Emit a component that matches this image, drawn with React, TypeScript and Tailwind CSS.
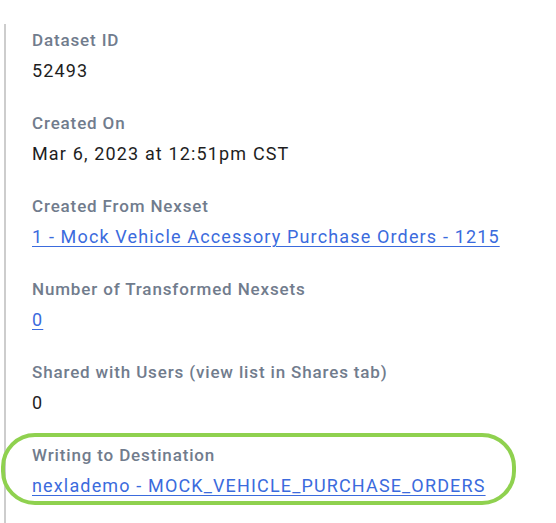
import React from "react";

const font = { fontFamily: "Roboto, 'Noto Sans', sans-serif" };

function Label({ children }: { children: React.ReactNode }) {
  return (
    <div className="text-[17px] leading-[26px] font-medium tracking-[0.85px] text-[#717c8d]">
      {children}
    </div>
  );
}

function Value({ children }: { children: React.ReactNode }) {
  return <div className="mt-[5px] text-[18px] leading-[26px] tracking-[1.15px] text-[#1e1e1e]">{children}</div>;
}

function LinkValue({ children }: { children: React.ReactNode }) {
  return (
    <div className="mt-[5px] text-[18px] leading-[26px] tracking-[1.15px]">
      <a href="#" className="text-[#3b6bdd] underline underline-offset-[3px] decoration-[1px]">
        {children}
      </a>
    </div>
  );
}

export default function App() {
  return (
    <div className="w-[556px] h-[523px] bg-white overflow-hidden" style={font}>
      <div className="ml-[4px] mt-[24px] h-[499px] border-l-2 border-[#cdcdcd] pl-[26px] pt-[3px] flex flex-col gap-[26px]">
        <div>
          <Label>Dataset ID</Label>
          <Value>52493</Value>
        </div>
        <div>
          <Label>Created On</Label>
          <Value>Mar 6, 2023 at 12:51pm CST</Value>
        </div>
        <div>
          <Label>Created From Nexset</Label>
          <LinkValue>1 - Mock Vehicle Accessory Purchase Orders - 1215</LinkValue>
        </div>
        <div>
          <Label>Number of Transformed Nexsets</Label>
          <LinkValue>0</LinkValue>
        </div>
        <div>
          <Label>Shared with Users (view list in Shares tab)</Label>
          <Value>0</Value>
        </div>
        <div className="relative">
          <div className="absolute left-[-31px] top-[-9px] h-[72px] w-[515px] rounded-[34px] border-[4px] border-[#8fd14f] pointer-events-none" />
          <Label>Writing to Destination</Label>
          <LinkValue>nexlademo - MOCK_VEHICLE_PURCHASE_ORDERS</LinkValue>
        </div>
      </div>
    </div>
  );
}
